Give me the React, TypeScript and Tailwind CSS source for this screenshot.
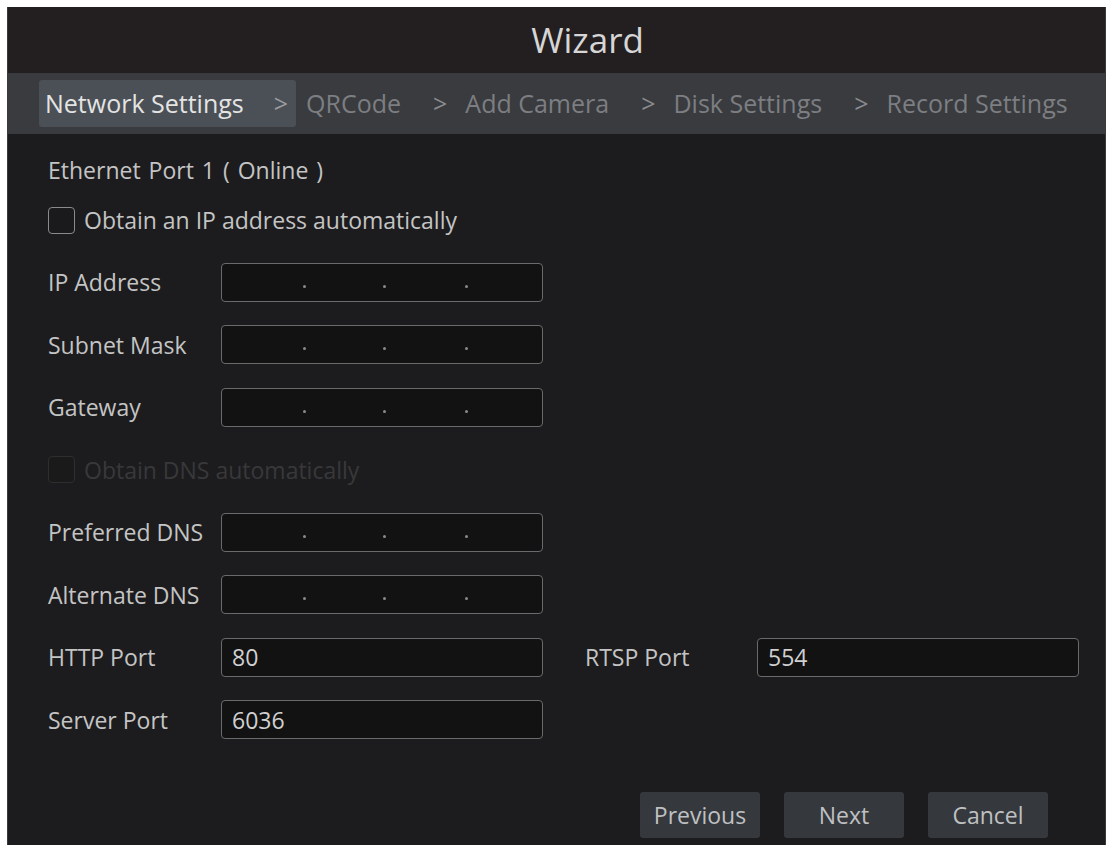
const font = { fontFamily: '"Open Sans", "Noto Sans", sans-serif' };

const steps = ["Network Settings", "QRCode", "Add Camera", "Disk Settings", "Record Settings"];

function IpField() {
  // dotted quad placeholder, four empty octets
  return (
    <div className="relative h-[39px] w-[322px] rounded-[4px] border border-[#6a6a6c] bg-[#121213]">
      <span className="absolute left-[81px] top-[21px] h-[3px] w-[3px] rounded-full bg-[#8a8a8a]" />
      <span className="absolute left-[161px] top-[21px] h-[3px] w-[3px] rounded-full bg-[#8a8a8a]" />
      <span className="absolute left-[243px] top-[21px] h-[3px] w-[3px] rounded-full bg-[#8a8a8a]" />
    </div>
  );
}

function TextField({ value }: { value: string }) {
  return (
    <div className="flex h-[39px] w-[322px] items-center rounded-[4px] border border-[#6a6a6c] bg-[#121213] pl-[10px] text-[23px] text-[#d0d0d0]">
      {value}
    </div>
  );
}

function Row({ label, children }: { label: string; children: React.ReactNode }) {
  return (
    <div className="flex h-[62.5px] items-center">
      <div className="w-[173px] text-[23px] text-[#c4c4c4]">{label}</div>
      {children}
    </div>
  );
}

function Checkbox({ label, disabled }: { label: string; disabled?: boolean }) {
  return (
    <div className="flex items-center gap-[9px]">
      <span
        className={`h-[27px] w-[27px] rounded-[4px] border ${
          disabled ? "border-[#2e2e30] bg-[#1a1a1b]" : "border-[#8a8a8c] bg-[#1a1a1c]"
        }`}
      />
      <span className={`text-[23px] ${disabled ? "text-[#38383a]" : "text-[#c4c4c4]"}`}>{label}</span>
    </div>
  );
}

export default function App() {
  return (
    <div className="min-h-screen bg-white pl-[7px] pt-[7px]" style={font}>
      <div className="flex h-[838px] w-[1099px] flex-col border-x border-[#3a3a3c] bg-[#1c1c1e]">
        {/* title bar */}
        <div className="flex h-[66px] items-center justify-center bg-[#231f20] pl-[62px] text-[35px] text-[#d6d6d6]">
          Wizard
        </div>

        {/* step tabs */}
        <div className="flex h-[61px] items-center whitespace-nowrap bg-[#393b3f] pl-[31px] text-[25px]">
          {steps.map((s, i) => (
            <div key={s} className="flex shrink-0 items-center">
              {i === 0 ? (
                <div className="flex h-[47px] items-center rounded-[3px] bg-[#4b5056] pl-[6px] pr-[8px] text-[#e4e4e4]">
                  {s}
                  <span className="ml-[30px] text-[#9a9ca0]">&gt;</span>
                </div>
              ) : (
                <>
                  <span className="ml-[10px] text-[#7c7e82]">{s}</span>
                  {i < steps.length - 1 && <span className="ml-[32px] mr-[8px] text-[#8a8c90]">&gt;</span>}
                </>
              )}
            </div>
          ))}
        </div>

        {/* form */}
        <div className="flex flex-1 flex-col pl-[40px] pt-[11px]">
          <div className="flex h-[50px] items-center text-[23px] text-[#c4c4c4] [word-spacing:2px]">
            Ethernet Port 1 ( Online )
          </div>
          <div className="flex h-[50px] items-center">
            <Checkbox label="Obtain an IP address automatically" />
          </div>
          <div className="mt-[6px]">
            <Row label="IP Address">
              <IpField />
            </Row>
            <Row label="Subnet Mask">
              <IpField />
            </Row>
            <Row label="Gateway">
              <IpField />
            </Row>
            <div className="flex h-[62.5px] items-center">
              <Checkbox label="Obtain DNS automatically" disabled />
            </div>
            <Row label="Preferred DNS">
              <IpField />
            </Row>
            <Row label="Alternate DNS">
              <IpField />
            </Row>
            <Row label="HTTP Port">
              <TextField value="80" />
              <div className="ml-[42px] w-[172px] text-[23px] text-[#c4c4c4]">RTSP Port</div>
              <TextField value="554" />
            </Row>
            <Row label="Server Port">
              <TextField value="6036" />
            </Row>
          </div>
        </div>

        {/* footer buttons */}
        <div className="flex justify-end gap-[24px] pb-[7px] pr-[57px]">
          {["Previous", "Next", "Cancel"].map((b) => (
            <button
              key={b}
              className="h-[46px] w-[120px] rounded-[3px] bg-[#35383c] text-[23px] text-[#bfc0c2]"
            >
              {b}
            </button>
          ))}
        </div>
      </div>
    </div>
  );
}
